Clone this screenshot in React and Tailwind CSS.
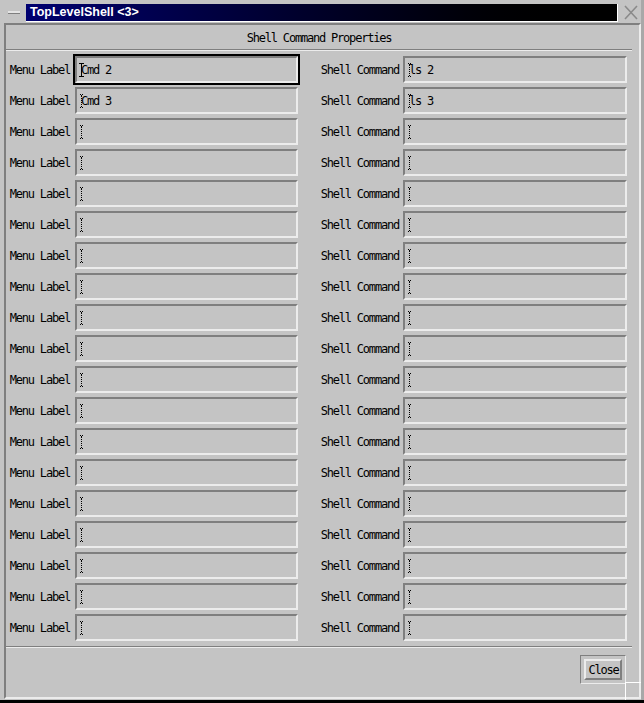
import React from "react";

const mono = "font-['DejaVu_Sans_Mono',monospace] text-[12px] tracking-[-1.2px] text-black";

function Cursor({ solid }) {
  if (solid) {
    return (
      <svg className="absolute left-[2px] top-[5px]" width="5" height="14" viewBox="0 0 5 14" shapeRendering="crispEdges">
        <rect x="0" y="0" width="5" height="1" fill="#000" />
        <rect x="0" y="13" width="5" height="1" fill="#000" />
        <rect x="2" y="0" width="1" height="14" fill="#000" />
      </svg>
    );
  }
  const dots = [];
  for (let y = 2; y <= 11; y += 2) dots.push(<rect key={y} x="2" y={y} width="1" height="1" fill="#000" />);
  return (
    <svg className="absolute left-[2px] top-[5px]" width="5" height="14" viewBox="0 0 5 14" shapeRendering="crispEdges">
      <rect x="1" y="0" width="1" height="1" fill="#000" />
      <rect x="3" y="0" width="1" height="1" fill="#000" />
      <rect x="2" y="1" width="1" height="1" fill="#000" />
      {dots}
      <rect x="2" y="12" width="1" height="1" fill="#000" />
      <rect x="1" y="13" width="1" height="1" fill="#000" />
      <rect x="3" y="13" width="1" height="1" fill="#000" />
    </svg>
  );
}

function Field({ value, focused, width }) {
  return (
    <div className={`${width} h-[31px] border-2 ${focused ? "border-black" : "border-transparent"}`}>
      <div className="relative h-full border-2 border-t-[#7f7f7f] border-l-[#7f7f7f] border-b-[#ececec] border-r-[#ececec] flex items-center pl-[4px]">
        <span className={`${mono} whitespace-pre leading-none`}>{value}</span>
        <Cursor solid={focused} />
      </div>
    </div>
  );
}

const rows = [
  { label: "Cmd 2", cmd: "ls 2", focused: true },
  { label: "Cmd 3", cmd: "ls 3" },
];
while (rows.length < 19) rows.push({ label: "", cmd: "" });

export default function App() {
  return (
    <div className="relative w-[644px] h-[703px] bg-[#c4c4c4] border-b-[3px] border-b-black flex flex-col overflow-hidden">
      {/* title row */}
      <div className="h-[23px] flex items-start shrink-0">
        <div className="w-[26px] pl-[8px] pt-[11px]">
          <div className="w-[12px] h-[3px] bg-[#e4e4e4] border-b border-[#7f7f7f]" />
        </div>
        <div className="mt-[4px] w-[592px] h-[18px] border-b border-r border-white bg-linear-to-r from-[#000070] to-black flex items-center pl-[4px]">
          <span className="font-['Liberation_Sans',Arial,sans-serif] font-bold text-[12.5px] text-white leading-none">
            TopLevelShell &lt;3&gt;
          </span>
        </div>
        <div className="ml-[6px] mt-[5px]">
          <svg width="14" height="15" viewBox="0 0 14 15">
            <path d="M1 1 L13 14 M13 1 L1 14" stroke="#8a8a8a" strokeWidth="1.6" fill="none" />
          </svg>
        </div>
      </div>

      {/* frame */}
      <div className="ml-[4px] w-[637px] h-[676px] border-2 border-t-[#7f7f7f] border-l-[#7f7f7f] border-b-[#ececec] border-r-[#ececec] flex flex-col">
        <div className={`w-[626px] h-[24px] pt-[1px] flex items-center justify-center ${mono} leading-none`}>
          Shell Command Properties
        </div>
        <div className="w-[626px] h-[2px] border-t border-t-[#7f7f7f] border-b border-b-[#ececec]" />
        <div className="mt-[3px] flex flex-col">
          {rows.map((r, i) => (
            <div key={i} className="flex items-center h-[31px]">
              <div className={`w-[67px] pr-[3px] flex justify-end ${mono} leading-none`}>Menu Label</div>
              <Field width="w-[227px]" value={r.label} focused={r.focused} />
              <div className={`w-[101px] pr-[2px] flex justify-end ${mono} leading-none`}>Shell Command</div>
              <Field width="w-[228px]" value={r.cmd} />
            </div>
          ))}
        </div>
        <div className="mt-[3px] w-[626px] h-[2px] border-t border-t-[#7f7f7f] border-b border-b-[#ececec]" />
        <div className="flex justify-end pr-[13px] pt-[7px]">
          <div className="w-[46px] h-[29px] border border-t-[#7f7f7f] border-l-[#7f7f7f] border-b-[#ececec] border-r-[#ececec] flex items-center justify-center">
            <div className={`w-[38px] h-[21px] border-2 border-t-[#ececec] border-l-[#ececec] border-b-[#7f7f7f] border-r-[#7f7f7f] flex items-center justify-center ${mono} leading-none pl-[1px]`}>
              Close
            </div>
          </div>
        </div>
      </div>

      {/* resize corner */}
      <div className="absolute left-[625px] top-[682px] w-[16px] h-[18px] border-l border-t border-white" />
      <div className="absolute right-0 top-0 w-[3px] h-full bg-[#a8a8a8]" />
    </div>
  );
}
